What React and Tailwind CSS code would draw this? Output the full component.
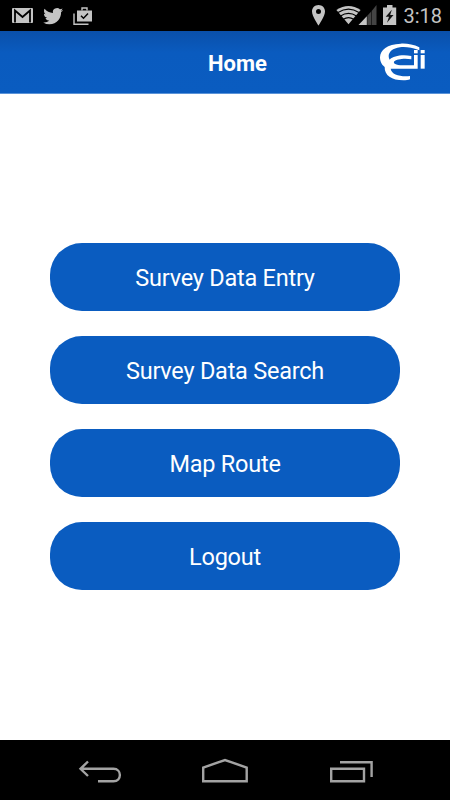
import React from "react"

const menuItems = ["Survey Data Entry", "Survey Data Search", "Map Route", "Logout"]

function StatusBar() {
  return (
    <div className="flex h-[31px] shrink-0 items-center justify-between bg-black pl-3 pr-2">
      <svg width="82" height="31" viewBox="12 0 82 31" fill="#c4c4c4">
        <rect x="12" y="8" width="21" height="15" rx="1" />
        <path d="M15 22.5V10.5L22.5 17L30 10.5V22.5" fill="none" stroke="#000" strokeWidth="1.8" />
        <g transform="translate(43.2 6.2) scale(0.83)">
          <path d="M23.953 4.57a10 10 0 01-2.825.775 4.958 4.958 0 002.163-2.723c-.951.555-2.005.959-3.127 1.184a4.92 4.92 0 00-8.384 4.482C7.69 8.095 4.067 6.13 1.64 3.162a4.822 4.822 0 00-.666 2.475c0 1.71.87 3.213 2.188 4.096a4.904 4.904 0 01-2.228-.616v.06a4.923 4.923 0 003.946 4.827 4.996 4.996 0 01-2.212.085 4.936 4.936 0 004.604 3.417 9.867 9.867 0 01-6.102 2.105c-.39 0-.779-.023-1.17-.067a13.995 13.995 0 007.557 2.209c9.053 0 13.998-7.496 13.998-13.985 0-.21 0-.42-.015-.63A9.935 9.935 0 0024 4.59z" />
        </g>
        <path d="M74 13.5V24.2H88.5" fill="none" stroke="#c4c4c4" strokeWidth="1.4" />
        <path d="M77 10.5H92V21.5H77Z" />
        <path d="M82 10.5V8H87V10.5" fill="none" stroke="#c4c4c4" strokeWidth="1.4" />
        <path d="M81 15.8L83.5 18.2L88 13.6" fill="none" stroke="#000" strokeWidth="1.5" />
      </svg>
      <div className="flex items-center">
        <svg width="90" height="31" viewBox="310 0 90 31" fill="#c4c4c4">
          <path fillRule="evenodd" d="M318.5 5C314.8 5 312 7.8 312 11.4C312 16 318.5 25.5 318.5 25.5S325 16 325 11.4C325 7.8 322.2 5 318.5 5ZM318.5 8.9A2.5 2.5 0 1 1 318.5 13.9A2.5 2.5 0 0 1 318.5 8.9Z" />
          <path d="M348.5 24.3L336.4 10Q348.5 1.8 360.6 10Z" />
          <g fill="none" stroke="#000" strokeWidth="1.2">
            <path d="M338 12.6Q348.5 5.8 359 12.6" />
            <path d="M340.5 16Q348.5 10.8 356.5 16" />
            <path d="M343.3 19.3Q348.5 16 353.7 19.3" />
          </g>
          <path d="M358.5 25L366.8 16.2V25Z" />
          <path d="M367.3 15.7L371.2 11.4V25H367.3Z" fill="#444" />
          <path d="M371.7 10.9L376.5 5V25H371.7Z" fill="#444" />
          <path d="M387 5H392.5V7.4H396.2V25H383V7.4H387Z" />
          <path d="M391.8 9.7L385.7 16.8H389L387 22.7L393.5 14.9H390.2Z" fill="#111" />
        </svg>
        <span className="ml-[3px] pt-0.5 text-[20px] leading-[29px] text-[#c4c4c4]">3:18</span>
      </div>
    </div>
  )
}

function Logo() {
  return (
    <svg width="47" height="40" viewBox="90 129 141 120" fill="#fff">
      <path d="M208 142C190 133 170 130 152 131C112 133 90 149 90 172C90 188 98 197 104 201C103 226 125 241 160 241C168 241 175 240 180 238V228C152 231 124 224 122 206H203V165H192V196H158C137 196 128 190 133 184C140 177 165 174 184 178V168C155 163 130 168 119 179C117 176 116 172 116 168C117 155 128 145 150 142C165 140 185 142 208 151Z" />
      <rect x="192" y="150" width="11" height="10" />
      <rect x="212" y="150" width="12" height="10" />
      <rect x="212" y="165" width="12" height="41" />
    </svg>
  )
}

function Header() {
  return (
    <header className="flex h-[63px] shrink-0 items-center border-b border-[#5a93d8] bg-linear-to-b from-[#0a50aa] via-[#0a5bbf] via-35% to-[#0a5cc0] pt-0.5 pr-[23px] pl-[95px] text-white">
      <h1 className="flex-1 text-center text-[22px] font-bold">Home</h1>
      <Logo />
    </header>
  )
}

function NavBar() {
  return (
    <nav className="flex h-[60px] shrink-0 items-center justify-center bg-black">
      <svg width="300" height="60" viewBox="75 740 300 60" fill="none" stroke="#a3a3a3" strokeWidth="2.4">
        <path d="M88 761.5L80.5 768.8L88 776M81 768.8H113.5C122 768.8 122 781.3 113.5 781.3H98" />
        <path d="M203.2 781.3V767.5L225 760L246.7 767.5V781.3Z" />
        <path d="M331.2 768.8H364V781.3H331.2ZM340 762.3H371.6V777" />
      </svg>
    </nav>
  )
}

export default function App() {
  return (
    <div className="flex h-screen w-full flex-col bg-white font-[Roboto,sans-serif]">
      <StatusBar />
      <Header />
      <main className="flex flex-1 flex-col justify-center gap-[25px] px-[50px] pb-px">
        {menuItems.map((item) => (
          <button
            key={item}
            className="h-[68px] w-full rounded-[32px] bg-[#0a5cc0] pt-1 text-[23.5px] tracking-[-0.23px] text-white"
          >
            {item}
          </button>
        ))}
      </main>
      <NavBar />
    </div>
  )
}
